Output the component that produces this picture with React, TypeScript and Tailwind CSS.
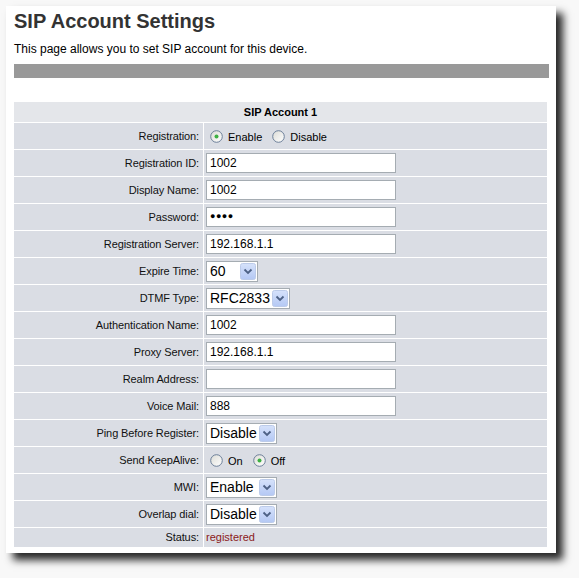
import React from "react";

const font = { fontFamily: '"Liberation Sans", Arial, sans-serif' };

const Radio = ({ checked }: { checked?: boolean }) => (
  <svg width="13" height="13" viewBox="0 0 13 13" className="shrink-0">
    <defs>
      <linearGradient id="rg" x1="0" y1="0" x2="1" y2="1">
        <stop offset="0" stopColor="#dcdcd6" />
        <stop offset="1" stopColor="#ffffff" />
      </linearGradient>
    </defs>
    <circle cx="6.5" cy="6.5" r="5.8" fill="url(#rg)" stroke="#6c7f99" strokeWidth="1" />
    {checked && <circle cx="6.5" cy="6.5" r="2" fill="#3cb043" />}
  </svg>
);

const TextBox = ({ value, password }: { value?: string; password?: boolean }) => (
  <div className="flex h-[20px] w-[190px] items-center border border-[#a5acb2] bg-white pl-[3px] text-[12px] text-black">
    {password ? <span className="text-[9px] tracking-[0.5px]">●●●●</span> : value}
  </div>
);

const Select = ({ value, width }: { value: string; width: string }) => (
  <div className={`flex h-[21px] items-center justify-between border border-[#a5acb2] bg-white pl-[3px] pr-px text-[14px] text-black ${width}`}>
    <span>{value}</span>
    <svg width="16" height="17" viewBox="0 0 16 17">
      <defs>
        <linearGradient id="bg" x1="0" y1="0" x2="0" y2="1">
          <stop offset="0" stopColor="#d6e2fb" />
          <stop offset="1" stopColor="#b4c8f4" />
        </linearGradient>
      </defs>
      <rect x="0.5" y="0.5" width="15" height="16" rx="2" fill="url(#bg)" stroke="#bccbe9" />
      <path d="M4.5 6.5 L8 10 L11.5 6.5" fill="none" stroke="#4d6185" strokeWidth="1.8" />
    </svg>
  </div>
);

const RadioPair = ({ a, b, first }: { a: string; b: string; first: boolean }) => (
  <div className="flex items-center pl-[4px] text-[11px] text-black">
    <Radio checked={first} />
    <span className="ml-[5px] mr-[10px] mt-[3px]">{a}</span>
    <Radio checked={!first} />
    <span className="ml-[5px] mt-[3px]">{b}</span>
  </div>
);

const rows: { label: string; field: React.ReactNode }[] = [
  { label: "Registration:", field: <RadioPair a="Enable" b="Disable" first /> },
  { label: "Registration ID:", field: <TextBox value="1002" /> },
  { label: "Display Name:", field: <TextBox value="1002" /> },
  { label: "Password:", field: <TextBox password /> },
  { label: "Registration Server:", field: <TextBox value="192.168.1.1" /> },
  { label: "Expire Time:", field: <Select value="60" width="w-[52px]" /> },
  { label: "DTMF Type:", field: <Select value="RFC2833" width="w-[84px]" /> },
  { label: "Authentication Name:", field: <TextBox value="1002" /> },
  { label: "Proxy Server:", field: <TextBox value="192.168.1.1" /> },
  { label: "Realm Address:", field: <TextBox value="" /> },
  { label: "Voice Mail:", field: <TextBox value="888" /> },
  { label: "Ping Before Register:", field: <Select value="Disable" width="w-[71px]" /> },
  { label: "Send KeepAlive:", field: <RadioPair a="On" b="Off" first={false} /> },
  { label: "MWI:", field: <Select value="Enable" width="w-[71px]" /> },
  { label: "Overlap dial:", field: <Select value="Disable" width="w-[71px]" /> },
];

export default function App() {
  return (
    <div className="h-[578px] w-[579px] overflow-hidden bg-[#f8f8f8] pl-[6px] pt-[6px]" style={font}>
      <div className="h-[547px] w-[550px] bg-white px-[8px] pt-[3px] shadow-[7px_7px_8px_rgba(0,0,0,0.85)]">
        <h1 className="text-[20px] font-bold leading-[24px] text-[#333]">SIP Account Settings</h1>
        <p className="mt-[9px] text-[12px] leading-[14px] text-black">This page allows you to set SIP account for this device.</p>
        <div className="mt-[8px] h-[14px] w-[535px] bg-[#999]" />

        <div className="mt-[24px] flex w-[533px] flex-col gap-px">
          <div className="flex h-[20px] items-center justify-center bg-[#e4e6ea] text-[11px] font-bold text-black">
            SIP Account 1
          </div>
          {rows.map((r) => (
            <div key={r.label} className="flex h-[26px] gap-px">
              <div className="flex w-[189px] items-center justify-end bg-[#dadde4] pr-[4px] text-[11px] tracking-[-0.1px] text-[#111]">
                {r.label}
              </div>
              <div className="flex flex-1 items-center bg-[#dadde4] pl-[2px]">{r.field}</div>
            </div>
          ))}
          <div className="flex h-[19px] gap-px">
            <div className="flex w-[189px] items-center justify-end bg-[#dadde4] pr-[4px] text-[11px] tracking-[-0.1px] text-[#111]">
              Status:
            </div>
            <div className="flex flex-1 items-center bg-[#dadde4] pl-[2px] text-[11px] text-[#8b1a1a]">registered</div>
          </div>
        </div>
      </div>
    </div>
  );
}
